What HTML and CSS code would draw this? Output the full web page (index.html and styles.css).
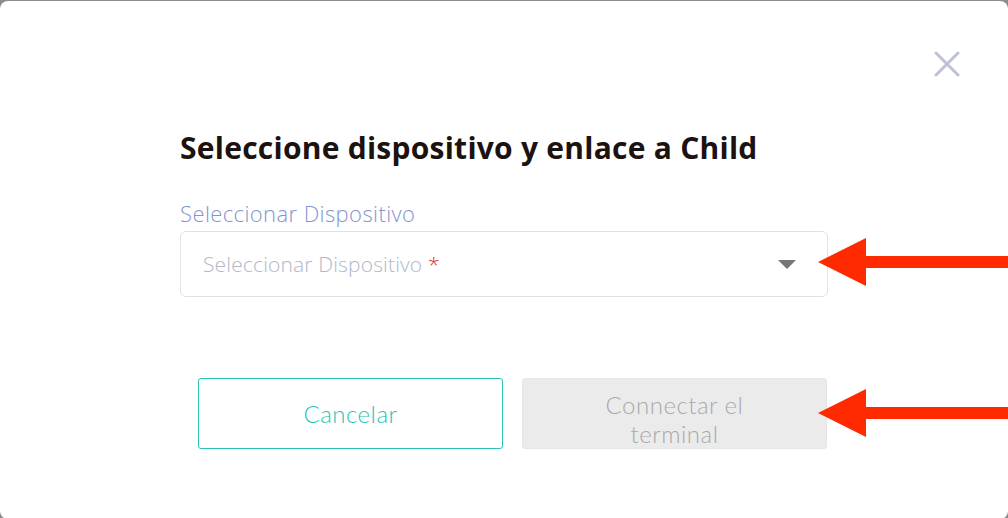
FILE: index.html
```html
<!DOCTYPE html>
<html lang="es">
<head>
<meta charset="utf-8">
<title>Seleccione dispositivo</title>
<link rel="stylesheet" href="styles.css">
</head>
<body>
<div class="modal">
  <div class="close-row">
    <button class="close" aria-label="Cerrar">
      <svg width="26" height="26" viewBox="0 0 26 26"><path d="M2 2 L24 24 M24 2 L2 24" stroke="#bcc1d8" stroke-width="3" stroke-linecap="round" fill="none"/></svg>
    </button>
  </div>
  <div class="content">
    <h1 class="title">Seleccione dispositivo y enlace a Child</h1>
    <label class="field-label">Seleccionar Dispositivo</label>
    <div class="select">
      <span class="placeholder">Seleccionar Dispositivo <span class="req">*</span></span>
      <svg class="caret" width="18" height="10" viewBox="0 0 18 10"><path d="M0 0 H18 L9 9 Z" fill="#777"/></svg>
    </div>
    <div class="actions">
      <button class="btn btn-outline">Cancelar</button>
      <button class="btn btn-disabled">Connectar el<br>terminal</button>
    </div>
  </div>
  <svg class="arrow arrow-1" width="190" height="52" viewBox="0 0 190 52"><path d="M0 26 L48 2 L48 20 L190 20 L190 32 L48 32 L48 50 Z" fill="#ff2a00"/></svg>
  <svg class="arrow arrow-2" width="190" height="52" viewBox="0 0 190 52"><path d="M0 26 L48 2 L48 20 L190 20 L190 32 L48 32 L48 50 Z" fill="#ff2a00"/></svg>
</div>
</body>
</html>
```
FILE: styles.css
```css
* { box-sizing: border-box; }
html, body { margin: 0; padding: 0; }
body {
  background: #8c8c8c;
  width: 1008px;
  height: 518px;
  overflow: hidden;
  font-family: "Open Sans", "Lato", sans-serif;
}
.modal {
  position: relative;
  margin-top: 1px;
  height: 518px;
  background: #fff;
  border-radius: 8px;
}
.close-row {
  display: flex;
  justify-content: flex-end;
  padding: 50px 48px 0 0;
  height: 78px;
}
.close {
  border: 0;
  background: none;
  padding: 0;
  width: 26px;
  height: 26px;
  cursor: pointer;
}
.close svg { display: block; }
.content {
  padding-left: 180px;
  width: 828px;
}
.title {
  margin: 49px 0 0 0;
  font-size: 30px;
  line-height: 40px;
  font-weight: 700;
  letter-spacing: 0.25px;
  color: #1c1210;
}
.field-label {
  display: block;
  margin-top: 32px;
  font-size: 22px;
  line-height: 26px;
  font-weight: 300;
  letter-spacing: 0.4px;
  color: #8394cf;
}
.select {
  margin-top: 5px;
  height: 66px;
  border: 1px solid #dfe2ea;
  border-radius: 6px;
  display: flex;
  align-items: center;
  justify-content: space-between;
  padding: 0 31px 0 22px;
}
.placeholder {
  font-size: 21px;
  font-weight: 300;
  letter-spacing: 0.15px;
  color: #b2b7ca;
}
.req { color: #e0281c; }
.caret { display: block; margin-top: 2px; }
.actions {
  display: flex;
  gap: 19px;
  padding-left: 18px;
  margin-top: 81px;
}
.btn {
  width: 305px;
  height: 71px;
  border-radius: 3px;
  font-family: "Lato", "Open Sans", sans-serif;
  font-size: 24px;
  font-weight: 300;
  line-height: 29px;
  letter-spacing: 0.5px;
  padding: 0;
}
.btn-outline {
  background: #fff;
  border: 1px solid #2bc4b4;
  color: #2bc4b4;
}
.btn-disabled {
  background: #ebebeb;
  border: 1px solid #e6e6e6;
  color: #a9a9a9;
  padding-top: 10px;
}
.arrow { position: absolute; left: 818px; }
.arrow-1 { top: 235px; }
.arrow-2 { top: 386px; }
```
